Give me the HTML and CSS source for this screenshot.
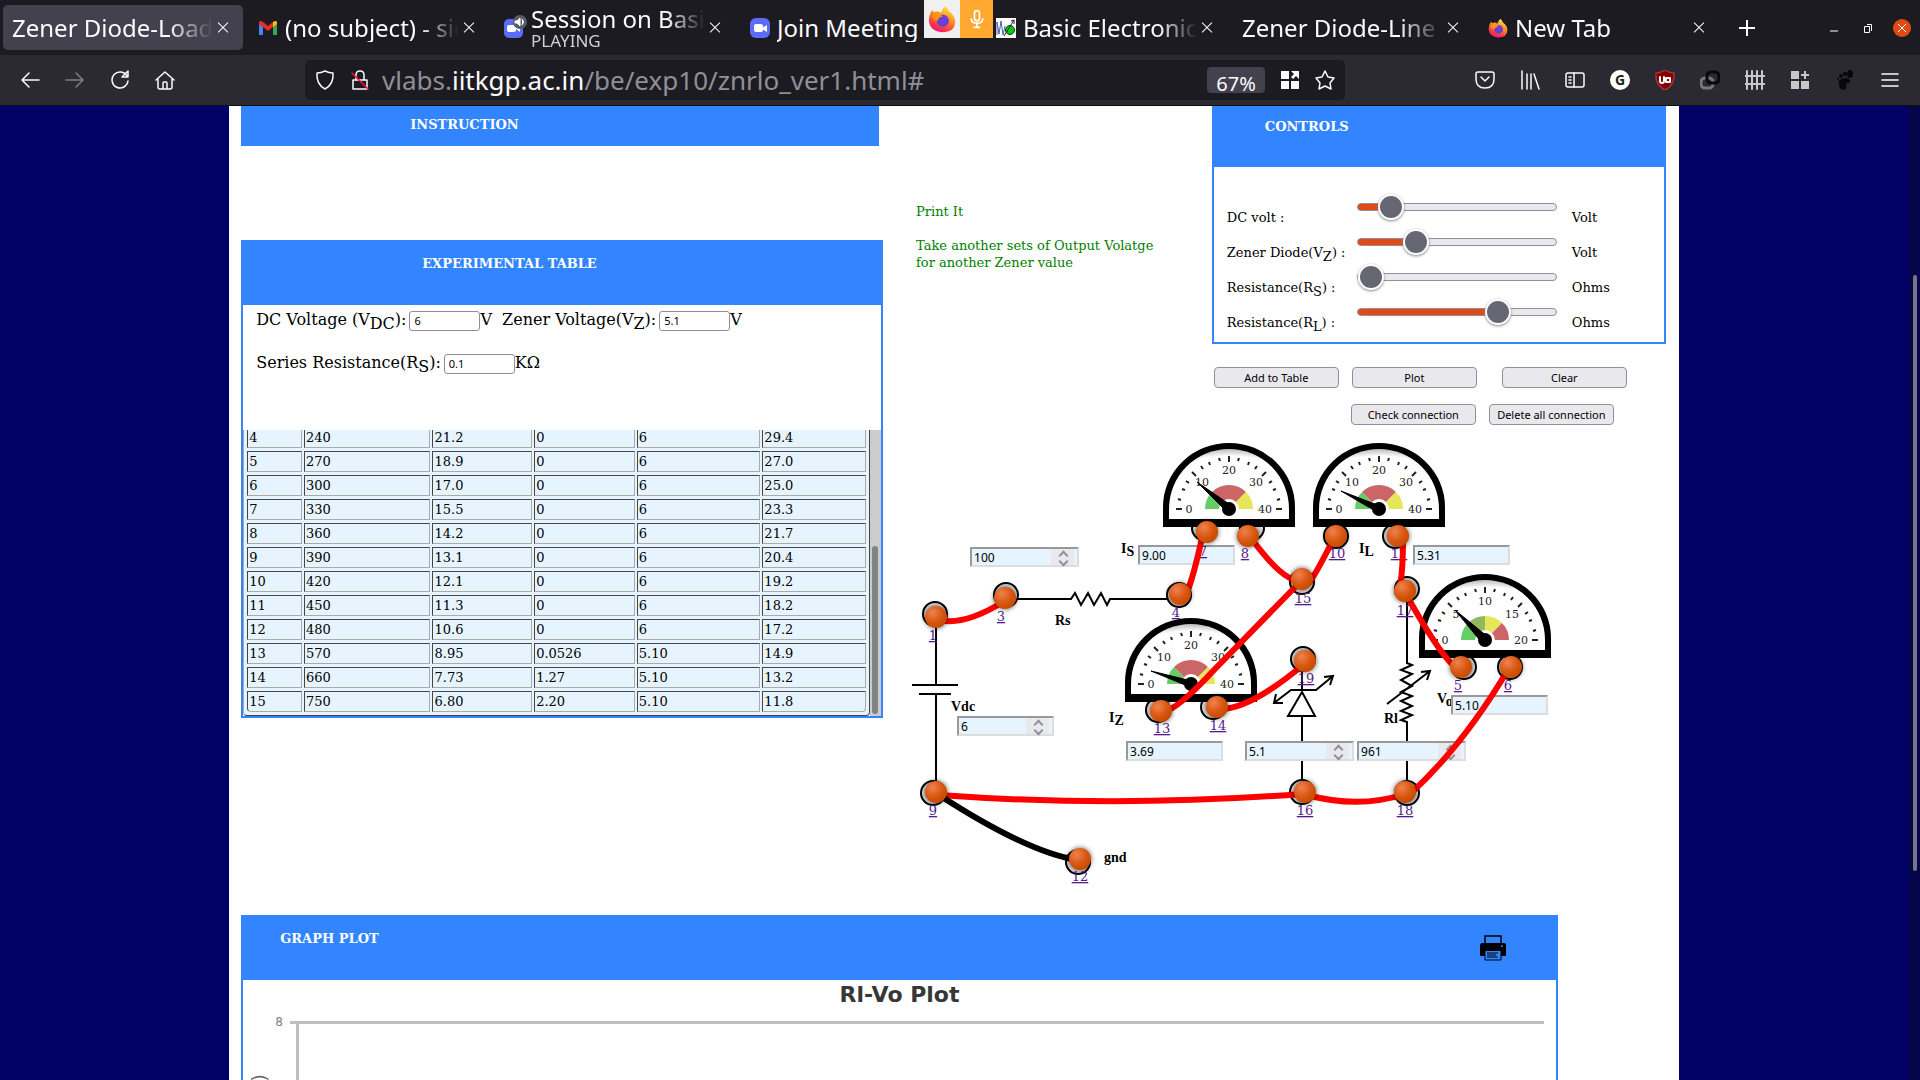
FILE: index.html
```html
<!DOCTYPE html>
<html lang="en">
<head>
<meta charset="utf-8">
<title>Zener Diode-Load Regulation</title>
<link rel="stylesheet" href="styles.css">
</head>
<body>
<header class="browser">
  <nav class="tabs" aria-label="Tabs">
    <div class="tab active"><span class="tab-text">Zener Diode-Load</span><button class="x" aria-label="Close tab"></button></div>
    <div class="tab">
      <svg class="fav" viewBox="0 0 20 20"><path d="M1 4v13h4V9l5 4 5-4v8h4V4" fill="none"/><path d="M1 17V4l4 3v10z" fill="#4285f4"/><path d="M15 17V7l4-3v13z" fill="#34a853"/><path d="M1 4q1-2 4 0l5 4 5-4v5l-5 4-9-7z" fill="#ea2b2b"/><path d="M15 4q3-2 4 0v2l-4 3z" fill="#fbbc04"/></svg>
      <span class="tab-text">(no subject) - sid</span><button class="x" aria-label="Close tab"></button></div>
    <div class="tab">
      <svg class="fav" viewBox="0 0 20 20"><rect x="0" y="1" width="19" height="19" rx="5" fill="#5b6df8"/><rect x="3" y="7" width="9" height="7" rx="2" fill="#fff"/><path d="M12 10l4-3v7l-4-3z" fill="#fff"/><circle cx="16" cy="4" r="7" fill="#5b5b66"/><path d="M11 3h2l3-3v8l-3-3h-2zM18 1q3 3 0 6" fill="#fff" stroke="#fff"/></svg>
      <span class="tab-text two">Session on Basic<small>PLAYING</small></span><button class="x" aria-label="Close tab"></button></div>
    <div class="tab">
      <svg class="fav" viewBox="0 0 20 20"><rect width="20" height="20" rx="6" fill="#5b6df8"/><rect x="4" y="6" width="9" height="8" rx="2" fill="#fff"/><path d="M12 10l5-3v7l-5-3z" fill="#fff"/></svg>
      <span class="tab-text full">Join Meeting</span>
      <div class="sharing">
        <span class="share-app"><svg viewBox="0 0 32 32"><use href="#fox"/></svg></span>
        <span class="share-mic"><svg viewBox="0 0 24 24" fill="none" stroke="#fff" stroke-width="2"><rect x="9" y="2" width="6" height="12" rx="3"/><path d="M5 11q0 6 7 6t7-6M12 17v5M8 22h8"/></svg></span>
      </div>
    </div>
    <div class="tab">
      <svg class="fav" viewBox="0 0 20 20"><rect width="20" height="20" fill="#fff"/><path d="M1 17V4l2 12 2-13 2 14 2-9" fill="none" stroke="#4b5fae"/><circle cx="14" cy="12" r="4.500" fill="#0c1" stroke="#131"/><path d="M8 18L18 2m-3 1l3-1v4" fill="none" stroke="#222"/></svg>
      <span class="tab-text">Basic Electronics</span><button class="x" aria-label="Close tab"></button></div>
    <div class="tab"><span class="tab-text">Zener Diode-Line R</span><button class="x" aria-label="Close tab"></button></div>
    <div class="tab">
      <svg class="fav" viewBox="0 0 32 32"><defs><linearGradient id="foxg" x1="0.8" y1="0" x2="0.3" y2="1"><stop offset="0" stop-color="#fff44f"/><stop offset="0.4" stop-color="#ff9a1f"/><stop offset="0.8" stop-color="#ff3647"/><stop offset="1" stop-color="#e31587"/></linearGradient>
      <g id="fox"><path d="M20 1q3 3 4 6 7 5 7 12 0 12-15 12Q2 30 1 18 1 11 5 5q0 3 2 3 5-2 8 1 1-5 5-8z" fill="url(#foxg)"/><circle cx="17" cy="18" r="7" fill="#6b3fd4"/><path d="M5 11q5-3 9 0l3 2q-6 1-6 5-6-1-6-7z" fill="#ff980e"/></g></defs><use href="#fox"/></svg>
      <span class="tab-text">New Tab</span><button class="x" aria-label="Close tab"></button></div>
    <button class="new-tab" aria-label="New tab"><svg viewBox="0 0 16 16"><path d="M8 0v16M0 8h16"/></svg></button>
    <div class="window-buttons">
      <button aria-label="Minimize"><svg viewBox="0 0 10 10"><path d="M1 8h8"/></svg></button>
      <button aria-label="Restore"><svg viewBox="0 0 10 10"><path d="M1.500 3.500h5v6h-5zM4 1.500h4.500V8" /></svg></button>
      <button class="quit" aria-label="Close window"><svg viewBox="0 0 10 10"><path d="M1 1l8 8M9 1L1 9"/></svg></button>
    </div>
  </nav>
  <div class="toolbar">
    <div class="nav-buttons">
      <button aria-label="Back"><svg viewBox="0 0 20 20"><path d="M19 10H2M9 3l-7 7 7 7"/></svg></button>
      <button class="dim" aria-label="Forward"><svg viewBox="0 0 20 20"><path d="M1 10h17M11 3l7 7-7 7"/></svg></button>
      <button aria-label="Reload"><svg viewBox="0 0 20 20"><path d="M17 6a8 8 0 1 0 1 5M18 1v6h-6z"/></svg></button>
      <button aria-label="Home"><svg viewBox="0 0 20 20"><path d="M1 10l9-8 9 8M3 9v8q0 2 2 2h10q2 0 2-2V9M8 19v-6q0-1 1-1h2q1 0 1 1v6"/></svg></button>
    </div>
    <div class="urlbar">
      <svg class="icon" viewBox="0 0 20 20"><path d="M10 1q4 2 8 2 1 11-8 16Q1 14 2 3q4 0 8-2z"/></svg>
      <svg class="icon" viewBox="0 0 20 20"><path d="M3 10h14v9H3zM6 10V5q0-4 4-4t4 4v5"/><path d="M2 3l16 16" stroke="#ff0f39"/></svg>
      <span class="url">vlabs.<b>iitkgp.ac.in</b>/be/exp10/znrlo_ver1.html#</span>
      <button class="zoom">67%</button>
      <svg class="icon solid" viewBox="0 0 20 20"><path d="M1 1h8v8H1zM1 11h8v8H1zM11 11h8v8h-8zM11 1h8v8l-3-3-3 3-2-2 3-3z"/></svg>
      <svg class="icon" viewBox="0 0 20 20"><path d="M10 1l3 6 6 1-4 5 1 6-6-3-6 3 1-6-4-5 6-1z"/></svg>
    </div>
    <div class="extensions">
      <svg class="icon" viewBox="0 0 20 20"><path d="M3 2h14q2 0 2 2v5q0 9-9 9T1 9V4q0-2 2-2zM6 7l4 4 4-4"/></svg>
      <svg class="icon" viewBox="0 0 20 20"><path d="M2 1v18M7 4v15M11 4v15M14 4l5 15"/></svg>
      <svg class="icon" viewBox="0 0 20 20"><rect x="1" y="3" width="18" height="14" rx="2"/><path d="M9 3v14M4 7h2M4 10h2M4 13h2"/></svg>
      <span class="gram">G</span>
      <svg class="icon" viewBox="0 0 20 20"><path d="M10 0q4 3 9 3 1 12-9 17Q0 15 1 3q5 0 9-3z" fill="#800000" stroke="#a33"/><path d="M5 7v4q0 2 2 2t2-2V7M11 8h4v4h-4z" stroke-width="2"/></svg>
      <svg class="icon" viewBox="0 0 20 20"><rect x="1" y="8" width="12" height="10" rx="4" stroke="#77777f" stroke-width="3"/><rect x="7" y="2" width="12" height="11" rx="4" stroke="#08080a" stroke-width="3"/></svg>
      <svg class="icon pale" viewBox="0 0 20 20"><path d="M2 1v18M7 1v18M12 1v18M17 1v18M0 6h20M0 14h20" stroke-width="2"/></svg>
      <svg class="icon solid pale" viewBox="0 0 20 20"><path d="M1 1h8v8H1zM1 11h8v8H1zM11 11h8v8h-8zM14 1h2v3h3v2h-3v3h-2V6h-3V4h3z"/></svg>
      <svg class="icon solid black" viewBox="0 0 20 20"><ellipse cx="15" cy="4" rx="3" ry="4"/><circle cx="10" cy="4" r="2"/><circle cx="6" cy="6" r="2"/><circle cx="3" cy="9" r="1"/><path d="M4 10q8-4 11 0 1 4-4 3 2 6-3 7-5-1-4-10z"/></svg>
      <svg class="icon" viewBox="0 0 20 20"><path d="M2 4h16M2 10h16M2 16h16"/></svg>
    </div>
  </div>
</header>

<div class="viewport">
<main class="sheet">
  <div class="columns">
    <div class="left">
      <section class="instruction"><h2>INSTRUCTION</h2></section>
      <section class="panel experiment">
        <h2>EXPERIMENTAL TABLE</h2>
        <form class="given">
          <div><label for="vdc">DC Voltage (V<sub>DC</sub>):</label><input id="vdc" value="6"><span>V</span><label class="next" for="vz">Zener Voltage(V<sub>Z</sub>):</label><input id="vz" value="5.1"><span>V</span></div>
          <div><label for="rs">Series Resistance(R<sub>S</sub>):</label><input id="rs" value="0.1"><span>KΩ</span></div>
        </form>
        <div class="readings">
          <table>
            <colgroup><col class="c1"><col class="c2"><col class="c3"><col class="c4"><col class="c5"><col class="c6"></colgroup>
            <tbody>
            <tr><td>4</td><td>240</td><td>21.2</td><td>0</td><td>6</td><td>29.4</td></tr>
            <tr><td>5</td><td>270</td><td>18.9</td><td>0</td><td>6</td><td>27.0</td></tr>
            <tr><td>6</td><td>300</td><td>17.0</td><td>0</td><td>6</td><td>25.0</td></tr>
            <tr><td>7</td><td>330</td><td>15.5</td><td>0</td><td>6</td><td>23.3</td></tr>
            <tr><td>8</td><td>360</td><td>14.2</td><td>0</td><td>6</td><td>21.7</td></tr>
            <tr><td>9</td><td>390</td><td>13.1</td><td>0</td><td>6</td><td>20.4</td></tr>
            <tr><td>10</td><td>420</td><td>12.1</td><td>0</td><td>6</td><td>19.2</td></tr>
            <tr><td>11</td><td>450</td><td>11.3</td><td>0</td><td>6</td><td>18.2</td></tr>
            <tr><td>12</td><td>480</td><td>10.6</td><td>0</td><td>6</td><td>17.2</td></tr>
            <tr><td>13</td><td>570</td><td>8.95</td><td>0.0526</td><td>5.10</td><td>14.9</td></tr>
            <tr><td>14</td><td>660</td><td>7.73</td><td>1.27</td><td>5.10</td><td>13.2</td></tr>
            <tr><td>15</td><td>750</td><td>6.80</td><td>2.20</td><td>5.10</td><td>11.8</td></tr>
            </tbody>
          </table>
          <div class="track"><div class="thumb"></div></div>
        </div>
      </section>
    </div>
    <div class="right">
      <div class="top">
        <div class="notes"><p>Print It</p><p>Take another sets of Output Volatge for another Zener value</p></div>
        <section class="panel controls">
          <h2>CONTROLS</h2>
          <div class="sliders">
            <div><label for="s1">DC volt :</label><input id="s1" type="range" value="12" style="--fill:16%"><span>Volt</span></div>
            <div><label for="s2">Zener Diode(V<sub>Z</sub>) :</label><input id="s2" type="range" value="26" style="--fill:29%"><span>Volt</span></div>
            <div><label for="s3">Resistance(R<sub>S</sub>) :</label><input id="s3" type="range" value="0" style="--fill:5%"><span>Ohms</span></div>
            <div><label for="s4">Resistance(R<sub>L</sub>) :</label><input id="s4" type="range" value="74" style="--fill:70%"><span>Ohms</span></div>
          </div>
        </section>
      </div>
      <div class="actions first"><button>Add to Table</button><button>Plot</button><button class="apart">Clear</button></div>
      <div class="actions second"><button>Check connection</button><button>Delete all connection</button></div>
      <div class="circuit">
        <svg class="layer" viewBox="0 0 680 470" width="680" height="470">
          <defs>
            <radialGradient id="face" cx="0.5" cy="0.86" r="0.86"><stop offset="0.88" stop-color="#fff"/><stop offset="1" stop-color="#bbb"/></radialGradient>
            <g id="dial">
              <path d="M-66 18V-2A66 64 0 0 1 66 -2V18z" fill="#000"/>
              <path d="M-60 10V0A60 60 0 0 1 60 0V10z" fill="url(#face)"/>
              <g stroke="#222" stroke-width="2">
                <path d="M-53 0h6M53 0h-6M0 -53v6M-37 -37l4 4M37 -37l-4 4"/>
                <path d="M-51 -10l3 1M-47 -20l3 1M-43 -28l3 2M-28 -43l2 3M-20 -47l1 3M-10 -51l1 3M51 -10l-3 1M47 -20l-3 1M43 -28l-3 2M28 -43l-2 3M20 -47l-1 3M10 -51l-1 3"/>
              </g>
            </g>
            <path id="z1" d="M-24 0A24 24 0 0 1 -17 -17L-7 -7A10 10 0 0 0 -10 0z"/>
            <path id="z2" d="M-17 -17A24 24 0 0 1 0 -24V-10A10 10 0 0 0 -7 -7z"/>
            <path id="z3" d="M17 -17A24 24 0 0 0 0 -24V-10A10 10 0 0 1 7 -7z"/>
            <path id="z4" d="M24 0A24 24 0 0 0 17 -17L7 -7A10 10 0 0 1 10 0z"/>
            <g id="amp"><use href="#dial"/><g opacity="0.8"><use href="#z1" fill="#40c040"/><use href="#z2" fill="#c04040"/><use href="#z3" fill="#c04040"/><use href="#z4" fill="#e0e030"/></g></g>
            <radialGradient id="ballg" cx="0.35" cy="0.3" r="0.75"><stop offset="0" stop-color="#ee8250"/><stop offset="0.6" stop-color="#d8560f"/><stop offset="1" stop-color="#c44a00"/></radialGradient>
            <filter id="soft" x="-50%" y="-50%" width="200%" height="200%"><feGaussianBlur stdDeviation="2"/></filter>
            <g id="ring"><circle r="12" fill="#ddd" stroke="#000" stroke-width="2"/></g>
            <g id="ball"><circle r="12" fill="#000" opacity="0.45" filter="url(#soft)"/><circle r="11" fill="url(#ballg)"/></g>
          </defs>
          <g fill="none" stroke="#000" stroke-width="2">
            <path d="M37 196V255M13 255H59M20 264H52M37 264V352"/>
            <path d="M118 169H172L176 163 182 175 189 163 195 175 202 163 208 175 211 169H268"/>
            <path d="M403 240V260M375 273L392 260H417L434 246M425 247L434 246 431 255M384 273L375 273 377 264M403 262L389 286H416zM403 286V352"/>
            <path d="M508 170V233L513 235 502 240 513 244 502 250 513 256 502 262 513 266 502 271 513 276 502 281 513 285 502 290 508 292V352M488 274L531 241M522 242L531 241 528 250"/>
          </g>
          <g><use href="#ring" x="36" y="184"/><use href="#ring" x="107" y="165"/><use href="#ring" x="280" y="165"/><use href="#ring" x="305" y="98"/><use href="#ring" x="353" y="98"/><use href="#ring" x="403" y="152"/><use href="#ring" x="437" y="106"/><use href="#ring" x="496" y="106"/><use href="#ring" x="508" y="159"/><use href="#ring" x="404" y="229"/><use href="#ring" x="403" y="362"/><use href="#ring" x="508" y="363"/><use href="#ring" x="565" y="237"/><use href="#ring" x="611" y="237"/><use href="#ring" x="259" y="280"/><use href="#ring" x="314" y="277"/><use href="#ring" x="34" y="363"/><use href="#ring" x="179" y="432"/></g>
          <use href="#amp" x="330" y="79"/><use href="#amp" x="480" y="79"/><use href="#amp" x="292" y="254"/>
          <g transform="translate(586 210)"><use href="#dial"/><g opacity="0.8"><use href="#z1" fill="#40c040"/><use href="#z2" fill="#79a838"/><use href="#z3" fill="#e0e030"/><use href="#z4" fill="#c04040"/></g></g>
          <g class="scale">
            <text x="290" y="83">0</text><text x="303" y="56">10</text><text x="330" y="44">20</text><text x="357" y="56">30</text><text x="366" y="83">40</text>
            <text x="440" y="83">0</text><text x="453" y="56">10</text><text x="480" y="44">20</text><text x="507" y="56">30</text><text x="516" y="83">40</text>
            <text x="252" y="258">0</text><text x="265" y="231">10</text><text x="292" y="219">20</text><text x="319" y="231">30</text><text x="328" y="258">40</text>
            <text x="546" y="214">0</text><text x="557" y="188">5</text><text x="586" y="175">10</text><text x="613" y="188">15</text><text x="622" y="214">20</text>
          </g>
          <g>
            <path d="M298 52L333 76 328 82zM442 61L481 76 478 82zM252 241L293 251 291 257zM556 180L589 207 583 213z" stroke="#000" stroke-width="1"/>
            <circle cx="330" cy="79" r="7"/><circle cx="480" cy="79" r="7"/><circle cx="292" cy="254" r="7"/><circle cx="586" cy="210" r="7"/>
          </g>
          <g class="part">
            <text x="156" y="195">Rs</text><text x="52" y="281">Vdc</text><text x="205" y="432">gnd</text><text x="485" y="293">Rl</text>
            <text x="222" y="123">I<tspan dy="3">S</tspan></text><text x="460" y="123">I<tspan dy="3">L</tspan></text><text x="210" y="292">I<tspan dy="3">Z</tspan></text><text x="538" y="273">V<tspan dy="3">o</tspan></text>
          </g>
        </svg>
        <span class="value wide p-rs"><input type="number" value="100" aria-label="Rs in ohms"><i></i></span>
        <span class="value p-is"><input value="9.00" aria-label="Is"></span>
        <span class="value p-il"><input value="5.31" aria-label="IL"></span>
        <span class="value p-vdc"><input type="number" value="6" aria-label="Vdc"><i></i></span>
        <span class="value p-iz"><input value="3.69" aria-label="Iz"></span>
        <span class="value wide p-vz"><input type="number" value="5.1" aria-label="Vz"><i></i></span>
        <span class="value wide p-rl"><input type="number" value="961" aria-label="Rl"><i></i></span>
        <span class="value p-vo"><input value="5.10" aria-label="Vo"></span>
        <svg class="layer wires" viewBox="0 0 680 470" width="680" height="470">
          <g class="pins">
            <a href="#"><text x="34" y="210">1</text></a><a href="#"><text x="102" y="191">3</text></a><a href="#"><text x="277" y="187">4</text></a><a href="#"><text x="304" y="126">7</text></a><a href="#"><text x="346" y="128">8</text></a><a href="#"><text x="404" y="173">15</text></a><a href="#"><text x="438" y="128">10</text></a><a href="#"><text x="500" y="128">11</text></a><a href="#"><text x="506" y="185">17</text></a><a href="#"><text x="407" y="253">19</text></a><a href="#"><text x="406" y="385">16</text></a><a href="#"><text x="506" y="385">18</text></a><a href="#"><text x="559" y="260">5</text></a><a href="#"><text x="609" y="260">6</text></a><a href="#"><text x="263" y="303">13</text></a><a href="#"><text x="319" y="300">14</text></a><a href="#"><text x="34" y="385">9</text></a><a href="#"><text x="181" y="451">12</text></a>
          </g>
          <g fill="none" stroke="#f00" stroke-width="6">
            <path d="M40 190Q65 196 104 172"/><path d="M289 160Q295 144 303 108"/><path d="M352 108Q380 146 396 150"/><path d="M410 153Q418 142 435 108"/>
            <path d="M402 151L315 240Q278 280 264 282"/><path d="M320 279Q350 280 404 235"/><path d="M504 110Q504 140 501 156"/><path d="M508 166Q544 230 558 238"/><path d="M610 238Q564 316 510 365"/>
            <path d="M40 365Q220 378 403 364"/><path d="M408 365Q460 379 506 364"/><path d="M40 365Q128 422 178 430" stroke="#000"/>
          </g>
          <g><use href="#ball" x="37" y="187"/><use href="#ball" x="106" y="168"/><use href="#ball" x="281" y="164"/><use href="#ball" x="308" y="102"/><use href="#ball" x="349" y="106"/><use href="#ball" x="403" y="149"/><use href="#ball" x="437" y="106"/><use href="#ball" x="499" y="106"/><use href="#ball" x="506" y="161"/><use href="#ball" x="406" y="231"/><use href="#ball" x="406" y="362"/><use href="#ball" x="506" y="362"/><use href="#ball" x="562" y="237"/><use href="#ball" x="612" y="237"/><use href="#ball" x="262" y="281"/><use href="#ball" x="318" y="277"/><use href="#ball" x="37" y="362"/><use href="#ball" x="181" y="429"/></g>
        </svg>
      </div>
    </div>
  </div>
  <section class="panel graph">
    <div class="graph-head"><h2>GRAPH PLOT</h2>
      <button class="print" aria-label="Print"><svg viewBox="0 0 26 26"><path d="M5 8V1h16v7" fill="none" stroke="#000" stroke-width="1.500"/><path d="M2 8h22q2 0 2 2v10q0 1-1 1h-4v-5H5v5H1q-1 0-1-1V10q0-2 2-2z"/><path d="M5 16v9h16v-9M7 18h11M7 20h9M7 22h11" fill="none" stroke="#000" stroke-width="1"/><circle cx="22" cy="11" r="1" fill="#3385ff"/></svg></button>
    </div>
    <div class="plot">
      <h3>Rl-Vo Plot</h3>
      <div class="axis"><span class="ylabel">)</span><span class="tick">8</span><div class="area"></div></div>
    </div>
  </section>
</main>
<div class="page-track"><div class="page-thumb"></div></div>
</div>
</body>
</html>
```
FILE: styles.css
```css
* { box-sizing: border-box; }
body { margin: 0; height: 100vh; display: flex; flex-direction: column; overflow: hidden; background: #006; color: #000; font: 13px/17px "DejaVu Serif", serif; }
button { font: inherit; color: inherit; border: 0; padding: 0; background: none; }
sub { line-height: 0; font-size: inherit; }
h2, h3, p { margin: 0; }

/* browser frame */
.browser { flex: none; background: #2b2a33; color: #fbfbfe; font-family: "Noto Sans", sans-serif; border-bottom: 1px solid #0c0c0d; }
.tabs { display: flex; height: 55px; padding: 5px 9px 5px 3px; background: #1c1b22; }
.tab { position: relative; flex: 0 1 240px; height: 45px; margin-right: 6px; padding: 0 10px 0 9px; display: flex; align-items: center; border-radius: 5px; font-size: 24px; line-height: 28px; min-width: 0; }
.tab.active { background: #42414d; }
.fav { flex: none; width: 20px; height: 20px; margin-right: 7px; overflow: visible; }
.tab-text { flex: 1; min-width: 0; overflow: hidden; white-space: nowrap; mask-image: linear-gradient(90deg, #000 78%, transparent); }
.tab-text.full { mask-image: none; }
.tab-text.two { line-height: 27px; }
.tab-text small { display: block; font-size: 17px; line-height: 18px; color: #cfcfd4; }
.x { position: relative; flex: none; width: 20px; height: 20px; }
.x::before, .x::after { content: ""; position: absolute; left: 3px; right: 3px; top: 9px; height: 1px; background: #fbfbfe; transform: rotate(45deg); }
.x::after { transform: rotate(-45deg); }
.sharing { position: absolute; top: -5px; right: -12px; height: 38px; display: flex; z-index: 1; }
.share-app, .share-mic { display: grid; place-items: center; background: #f0f0f0; width: 36px; }
.share-mic { background: #ffa930; width: 33px; }
.share-app svg { width: 28px; height: 28px; }
.share-mic svg { width: 20px; height: 20px; }
.new-tab { width: 44px; display: grid; place-items: center; }
.new-tab svg { width: 16px; height: 16px; stroke: #fbfbfe; stroke-width: 2; }
.window-buttons { margin-left: auto; display: flex; align-items: center; gap: 16px; }
.window-buttons button { width: 18px; height: 18px; display: grid; place-items: center; border-radius: 50%; }
.window-buttons svg { width: 10px; height: 10px; fill: none; stroke: #fff; }
.window-buttons .quit { background: #e04a16; }
.toolbar { display: flex; align-items: center; height: 50px; padding: 5px 20px; }
.nav-buttons { display: flex; gap: 25px; }
.nav-buttons button { width: 20px; height: 20px; }
.nav-buttons svg, .icon { flex: none; display: block; width: 20px; height: 20px; fill: none; stroke: #fbfbfe; stroke-width: 1.5; stroke-linejoin: round; stroke-linecap: round; }
.nav-buttons .dim { opacity: 0.4; }
.icon.solid { fill: #fbfbfe; stroke: none; }
.icon.pale { stroke: #c8c8cc; }
.icon.solid.pale { fill: #c8c8cc; stroke: none; }
.icon.black { fill: #08080a; }
.urlbar { flex: 1; height: 40px; margin: 0 130px 0 130px; padding: 0 10px; display: flex; align-items: center; gap: 15px; background: #1c1b22; border-radius: 5px; }
.url { flex: 1; margin-left: -3px; font-size: 26px; line-height: 32px; color: #8f8f9a; white-space: nowrap; }
.url b { font-weight: 400; color: #fbfbfe; }
.zoom { width: 58px; height: 26px; border-radius: 4px; background: #42414d; font-size: 20px; line-height: 34px; }
.extensions { display: flex; align-items: center; gap: 25px; }
.gram { width: 20px; height: 20px; border-radius: 50%; background: #fff; color: #222; font-size: 14px; line-height: 20px; font-weight: 700; text-align: center; }

/* page */
.viewport { flex: 1; min-height: 0; display: flex; overflow: hidden; }
.sheet { width: 75.5%; margin: 0 auto; padding: 0 13px 0 12px; background: #fff; }
.page-track { width: 12px; flex: none; background: #05054b; padding: 169px 3px 0 5px; }
.page-thumb { height: 74%; border-radius: 3px; background: #75758a; }
.columns { display: grid; grid-template-columns: 642fr 767fr; gap: 16px; }
h2 { font-size: 13px; line-height: 17px; color: #fff; }
.instruction { height: 40px; margin: 0 4px 94px 0; padding: 10px 169px; background: #3385ff; }
.panel { border: 2px solid #3385ff; background: #fff; }
.panel > h2 { background: #3385ff; }
.experiment > h2 { height: 63px; padding: 13px 179px; }
.given { padding: 6px 13px 0; font-size: 16px; line-height: 20px; }
.given div { display: flex; height: 20px; margin-bottom: 23px; white-space: nowrap; }
.given input { width: 71px; height: 20px; padding: 0 4px 2px; border: 1px solid #8f8f9d; border-radius: 3px; font: 11px "Noto Sans", sans-serif; }
.given .next { margin-left: 10px; }
.given label, .given span { margin-top: -1px; }
.given label { padding-right: 3px; }
.readings { height: 286px; margin-top: 56px; overflow: hidden; display: flex; align-items: flex-end; }
table { flex: 1; table-layout: fixed; border-collapse: separate; border-spacing: 2px 3px; background: #e6f4ff; border: 1px solid #444; border-left-color: #aaa; border-radius: 4px; padding: 0 1px; }
td { height: 21px; padding: 0 1px; border: 1px solid #aaa; border-top-color: #444; border-left-color: #444; line-height: 17px; }
tr:last-child td:first-child { border-bottom-left-radius: 4px; }
tr:last-child td:last-child { border-bottom-right-radius: 4px; }
.c1 { width: 55px; } .c2 { width: 127px; } .c3 { width: 100px; } .c4 { width: 101px; } .c5 { width: 124px; } .c6 { width: 104px; }
.track { width: 11px; height: 100%; background: #ccc; padding: 116px 3px 2px 2px; }
.thumb { height: 100%; border-radius: 3px; background: #808484; }

.top { display: flex; justify-content: space-between; }
.notes { width: 267px; padding: 97px 0 0 17px; color: #008000; }
.notes p + p { margin-top: 17px; }
.controls { width: 454px; height: 238px; }
.controls > h2 { height: 59px; padding: 10px 51px; }
.sliders { display: grid; gap: 5px; padding: 29px 13px 0; }
.sliders > div { display: grid; grid-template-columns: 130px 200px 1fr; height: 30px; align-items: end; white-space: nowrap; }
.sliders span { margin-left: 15px; }
input[type="range"] { appearance: none; align-self: start; width: 200px; height: 22px; margin: 0; background: none; }
input[type="range"]::-webkit-slider-runnable-track { height: 8px; border: 1px solid #8f8f9d; border-radius: 4px; background: linear-gradient(90deg, #e04a16 var(--fill), #e9e9ed var(--fill)); }
input[type="range"]::-webkit-slider-thumb { appearance: none; width: 26px; height: 26px; margin-top: -10px; border: 2px solid #fff; border-radius: 50%; background: #676774; box-shadow: 0 1px 3px #888; }
.actions { display: flex; justify-content: flex-end; }
.actions button { width: 125px; height: 21px; margin-left: 13px; border: 1px solid #8f8f9d; border-radius: 4px; background: #e9e9ed; font: 11px/17px "Noto Sans", sans-serif; }
.actions .apart { margin-left: 25px; }
.first { padding: 23px 39px 0 0; }
.second { padding: 16px 52px 0 0; }

/* circuit canvas */
.circuit { position: relative; height: 470px; margin-top: 5px; }
.layer { position: absolute; left: 0; top: 0; }
.wires { pointer-events: none; }
.scale { font-size: 11px; text-anchor: middle; fill: #222; }
.part { font: bold 14px "Liberation Serif", serif; }
.pins { font-size: 13px; text-anchor: middle; fill: #551a8b; text-decoration: underline; }
.pins a { fill: #551a8b; }
.value { position: absolute; width: 97px; height: 20px; }
.value.wide { width: 109px; }
.value input { width: 100%; height: 100%; margin: 0; padding: 0 2px; border: 2px solid #999; border-right-color: #ddd; border-bottom-color: #ddd; background: #e6f4ff; font: 12px "Noto Sans", sans-serif; appearance: textfield; }
.value input::-webkit-inner-spin-button { appearance: none; margin: 0; }
.value i { position: absolute; right: 5px; top: 2px; width: 23px; height: 16px; background: #e9e9ed; }
.value i::before, .value i::after { content: ""; position: absolute; left: 9px; top: 3px; width: 5px; height: 5px; border: solid #8f8f9d; border-width: 2px 0 0 2px; transform: rotate(45deg); }
.value i::after { top: 9px; transform: rotate(225deg); }
.p-rs { left: 71px; top: 117px; }
.p-is { left: 239px; top: 115px; }
.p-il { left: 514px; top: 115px; }
.p-vdc { left: 58px; top: 286px; }
.p-iz { left: 227px; top: 311px; }
.p-vz { left: 346px; top: 311px; }
.p-rl { left: 458px; top: 311px; }
.p-vo { left: 552px; top: 265px; }

.graph { margin: 15px 108px 0 0; height: 600px; }
.graph-head { display: flex; justify-content: space-between; height: 63px; padding: 13px 50px 0 37px; background: #3385ff; }
.print { width: 26px; height: 26px; margin-top: 5px; }
.print svg { display: block; }
.plot h3 { padding-top: 2px; text-align: center; font: bold 22px/26px "DejaVu Sans", sans-serif; color: #373737; }
.axis { display: grid; grid-template-columns: 26px 14px 1fr; padding: 4px 12px 0 6px; color: #808080; }
.ylabel { align-self: start; justify-self: start; margin-top: 62px; writing-mode: vertical-rl; transform: rotate(180deg); font: 20px/20px "DejaVu Sans", sans-serif; color: #666; }
.tick { font: 12px/24px "DejaVu Sans", sans-serif; margin-top: -2px; }
.area { position: relative; height: 400px; margin: 9px 0 0 7px; border-top: 3px solid #bfbfbf; border-left: 3px solid #bfbfbf; }
.area::before { content: ""; position: absolute; left: -9px; top: -3px; width: 6px; height: 3px; background: #bfbfbf; }
```
